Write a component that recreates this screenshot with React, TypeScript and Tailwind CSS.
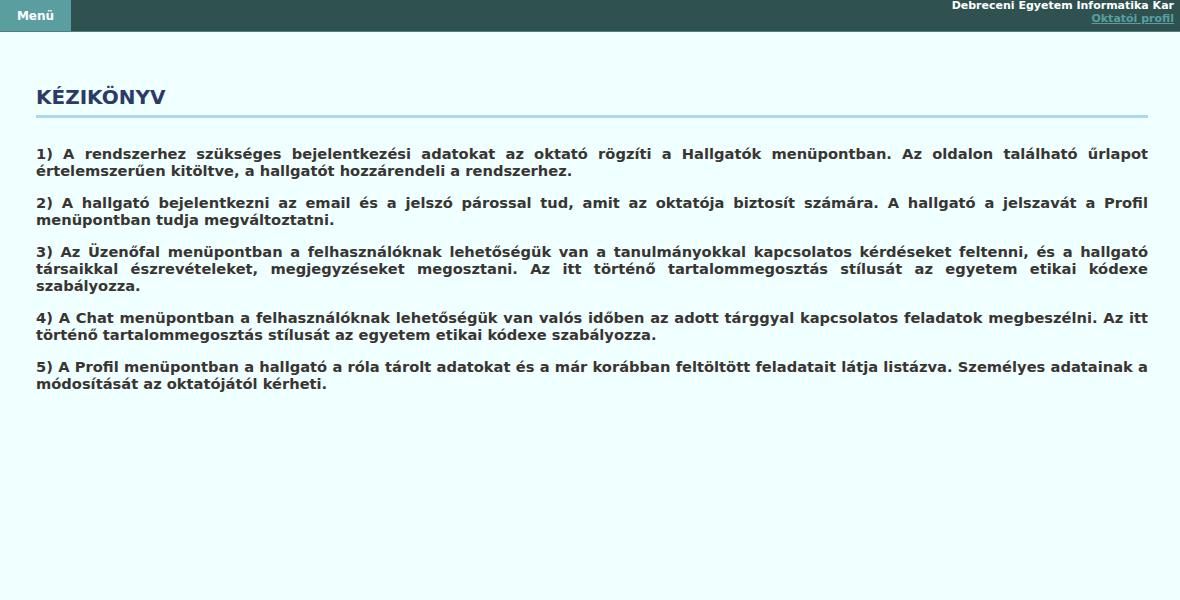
const ITEMS = [
  "1) A rendszerhez szükséges bejelentkezési adatokat az oktató rögzíti a Hallgatók menüpontban. Az oldalon található űrlapot értelemszerűen kitöltve, a hallgatót hozzárendeli a rendszerhez.",
  "2) A hallgató bejelentkezni az email és a jelszó párossal tud, amit az oktatója biztosít számára. A hallgató a jelszavát a Profil menüpontban tudja megváltoztatni.",
  "3) Az Üzenőfal menüpontban a felhasználóknak lehetőségük van a tanulmányokkal kapcsolatos kérdéseket feltenni, és a hallgató társaikkal észrevételeket, megjegyzéseket megosztani. Az itt történő tartalommegosztás stílusát az egyetem etikai kódexe szabályozza.",
  "4) A Chat menüpontban a felhasználóknak lehetőségük van valós időben az adott tárggyal kapcsolatos feladatok megbeszélni. Az itt történő tartalommegosztás stílusát az egyetem etikai kódexe szabályozza.",
  "5) A Profil menüpontban a hallgató a róla tárolt adatokat és a már korábban feltöltött feladatait látja listázva. Személyes adatainak a módosítását az oktatójától kérheti.",
];

export default function App() {
  return (
    <div className="min-h-[600px] bg-[#f0ffff] font-['DejaVu_Sans',sans-serif]">
      <header className="flex h-[32px] justify-between border-b border-[#4f7f7f] bg-[#2f5250]">
        <button className="w-[71px] bg-[#5a9ea0] text-[12px] font-bold text-white">Menü</button>
        <div className="-mt-px flex flex-col items-end pr-[6px] text-[11px] font-bold leading-[13px]">
          <span className="text-white">Debreceni Egyetem Informatika Kar</span>
          <a href="#" className="text-[#5a9ea0] underline">Oktatói profil</a>
        </div>
      </header>

      <main className="px-[36px] pr-[32px] pt-[53px]">
        <h1 className="border-b-[3px] border-[#add8e6] pb-[6px] text-[20px] font-bold leading-[24px] text-[#2c3a66]">
          KÉZIKÖNYV
        </h1>
        <div className="mt-[27px] text-[14.67px] font-bold leading-[17px] text-[#383532]">
          {ITEMS.map((t) => (
            <p key={t} className="mb-[15px] text-justify">
              {t}
            </p>
          ))}
        </div>
      </main>
    </div>
  );
}
